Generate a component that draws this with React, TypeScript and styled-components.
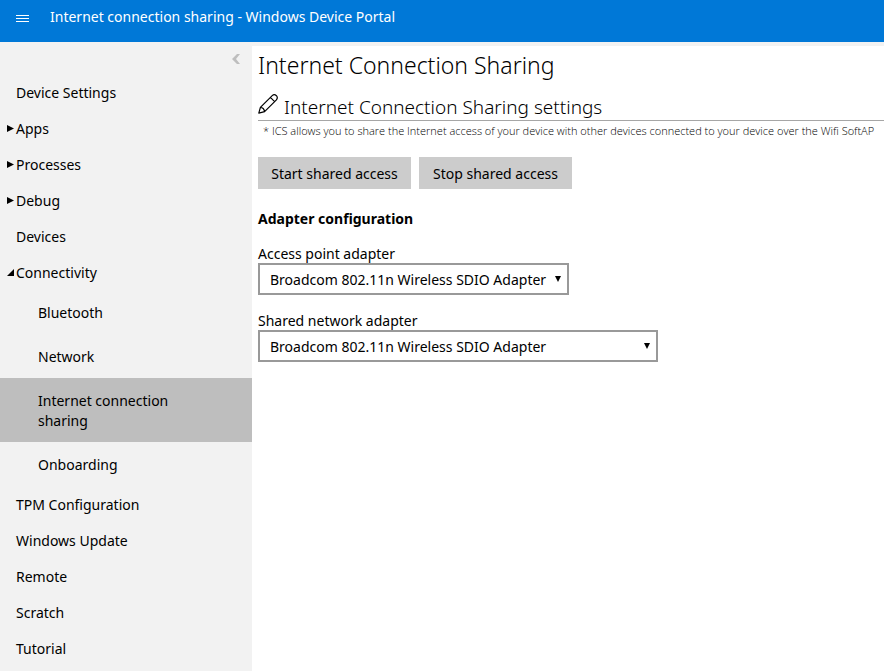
import React from 'react';
import styled, { createGlobalStyle } from 'styled-components';

const GlobalStyle = createGlobalStyle`
  *, *::before, *::after { box-sizing: border-box; }
  body {
    margin: 0;
    background: #fff;
    color: #000;
    font: 400 14px/20px 'Segoe UI', 'Noto Sans', 'Open Sans', sans-serif;
  }
`;

const Page = styled.div`
  display: flex;
  flex-direction: column;
  min-height: 100vh;
`;

const Header = styled.header`
  display: flex;
  align-items: flex-start;
  gap: 20px;
  height: 42px;
  padding: 7px 16px;
  background: #0078d7;
  color: #fff;
`;

const IconButton = styled.button`
  display: flex;
  padding: 0;
  border: 0;
  background: none;
  color: inherit;
  cursor: pointer;
`;

const MenuButton = styled(IconButton)`
  padding: 8px 1px 0 0;
`;

const Brand = styled.span`
  font-size: 14px;
  line-height: 20px;
`;

const Body = styled.div`
  display: grid;
  grid-template-columns: 252px minmax(0, 1fr);
  flex: 1;
`;

const Sidebar = styled.aside`
  background: #f2f2f2;
`;

const CollapseRow = styled.div`
  display: flex;
  justify-content: flex-end;
  height: 32px;
  padding: 12px 12px 0 0;
  color: #bebebe;
`;

const NavList = styled.ul`
  margin: 0;
  padding: 0;
  list-style: none;
`;

const NavLink = styled.a`
  display: flex;
  align-items: center;
  min-height: 36px;
  padding: 9px 16px 7px 6px;
  color: #000;
  text-decoration: none;
`;

const Marker = styled.span`
  display: flex;
  flex: 0 0 10px;
`;

const SubLink = styled.a<{ $active?: boolean }>`
  display: block;
  padding: 13px 64px 11px 38px;
  background: ${({ $active }) => ($active ? '#bebebe' : 'transparent')};
  color: #000;
  text-decoration: none;
`;

const Content = styled.main`
  padding: 3px 0 0 6px;
  border-top: 4px solid #f2f2f2;
`;

const Title = styled.h1`
  margin: 0;
  font-size: 23px;
  font-weight: 350;
  line-height: 32px;
`;

const SectionTitle = styled.h2`
  display: flex;
  align-items: center;
  gap: 6px;
  margin: 11px 0 0;
  padding-top: 2px;
  border-bottom: 1px solid #a6a6a6;
  font-size: 19px;
  font-weight: 350;
  line-height: 26px;

  > svg { margin-bottom: 6px; }
`;

const Note = styled.p`
  margin: 0;
  padding: 2px 0 0 5px;
  font-family: 'Segoe UI', 'Open Sans', sans-serif;
  font-size: 11px;
  font-weight: 300;
  line-height: 16px;
`;

const Actions = styled.div`
  display: flex;
  gap: 8px;
  margin-top: 18px;
`;

const ActionButton = styled.button`
  min-width: 153px;
  height: 32px;
  padding: 1px 12px 0;
  border: 0;
  background: #ccc;
  color: #000;
  font: inherit;
  cursor: pointer;
`;

const GroupTitle = styled.h3`
  margin: 20px 0 15px;
  font-size: 14px;
  font-weight: 700;
  line-height: 20px;
`;

const Field = styled.div`
  margin-bottom: 16px;
`;

const Label = styled.label`
  display: block;
  line-height: 19px;
`;

const SelectBox = styled.div<{ $width: number }>`
  display: grid;
  align-items: center;
  width: ${({ $width }) => $width}px;
  max-width: 100%;

  > * { grid-area: 1 / 1; }
  > svg { justify-self: end; margin-right: 8px; pointer-events: none; }
`;

const Select = styled.select`
  width: 100%;
  height: 32px;
  padding: 1px 18px 0 10px;
  border: 2px solid #999;
  border-radius: 0;
  appearance: none;
  background: #fff;
  color: #000;
  font: inherit;
`;

const MenuIcon = () => (
  <svg width="13" height="8" viewBox="0 0 13 8" fill="currentColor" aria-hidden="true">
    <path d="M0 0h13v1H0zM0 3h13v1H0zM0 6h13v1H0z" />
  </svg>
);

const CollapseIcon = () => (
  <svg width="8" height="10" viewBox="0 0 8 10" fill="currentColor" aria-hidden="true">
    <path d="M5 0h3L4 5 8 10H5L0 5z" />
  </svg>
);

const ClosedIcon = () => (
  <svg width="8" height="8" viewBox="0 0 8 8" aria-hidden="true">
    <path d="M1 0v7L8 3.5z" />
  </svg>
);

const OpenIcon = () => (
  <svg width="8" height="8" viewBox="0 0 8 8" aria-hidden="true">
    <path d="M8 0v7H1z" />
  </svg>
);

const PencilIcon = () => (
  <svg width="20" height="20" viewBox="0 0 20 20" fill="none" stroke="currentColor" strokeWidth="1.2" strokeLinejoin="round" aria-hidden="true">
    <path d="M.8 19.2 2.4 13.4 14.2 1.6Q16.3-.2 18.4 1.7 20.2 3.8 18.4 5.9L6.6 17.6ZM2.4 13.4Q5.9 13.7 6.6 17.6M12.4 3.4 16.6 7.6" />
  </svg>
);

const ArrowIcon = () => (
  <svg width="6" height="6" viewBox="0 0 6 6" aria-hidden="true">
    <path d="M0 0h6L3 6z" />
  </svg>
);

type NavItem = { label: string; closed?: boolean; children?: string[] };

const navItems: NavItem[] = [
  { label: 'Device Settings' },
  { label: 'Apps', closed: true },
  { label: 'Processes', closed: true },
  { label: 'Debug', closed: true },
  { label: 'Devices' },
  { label: 'Connectivity', children: ['Bluetooth', 'Network', 'Internet connection sharing', 'Onboarding'] },
  { label: 'TPM Configuration' },
  { label: 'Windows Update' },
  { label: 'Remote' },
  { label: 'Scratch' },
  { label: 'Tutorial' },
];

const activePage = 'Internet connection sharing';
const adapter = 'Broadcom 802.11n Wireless SDIO Adapter';

const AdapterField = ({ id, label, width }: { id: string; label: string; width: number }) => (
  <Field>
    <Label htmlFor={id}>{label}</Label>
    <SelectBox $width={width}>
      <Select id={id}>
        <option>{adapter}</option>
      </Select>
      <ArrowIcon />
    </SelectBox>
  </Field>
);

export default function App() {
  return (
    <Page>
      <GlobalStyle />
      <Header>
        <MenuButton type="button" aria-label="Menu"><MenuIcon /></MenuButton>
        <Brand>Internet connection sharing - Windows Device Portal</Brand>
      </Header>
      <Body>
        <Sidebar>
          <CollapseRow>
            <IconButton type="button" aria-label="Collapse navigation"><CollapseIcon /></IconButton>
          </CollapseRow>
          <nav>
            <NavList>
              {navItems.map(({ label, closed, children }) => (
                <li key={label}>
                  <NavLink href="#">
                    <Marker>{closed && <ClosedIcon />}{children && <OpenIcon />}</Marker>
                    {label}
                  </NavLink>
                  {children && (
                    <NavList>
                      {children.map((child) => (
                        <li key={child}>
                          <SubLink href="#" $active={child === activePage}>{child}</SubLink>
                        </li>
                      ))}
                    </NavList>
                  )}
                </li>
              ))}
            </NavList>
          </nav>
        </Sidebar>
        <Content>
          <Title>Internet Connection Sharing</Title>
          <SectionTitle><PencilIcon />Internet Connection Sharing settings</SectionTitle>
          <Note>* ICS allows you to share the Internet access of your device with other devices connected to your device over the Wifi SoftAP</Note>
          <Actions>
            <ActionButton type="button">Start shared access</ActionButton>
            <ActionButton type="button">Stop shared access</ActionButton>
          </Actions>
          <GroupTitle>Adapter configuration</GroupTitle>
          <AdapterField id="access-point" label="Access point adapter" width={311} />
          <AdapterField id="shared-network" label="Shared network adapter" width={400} />
        </Content>
      </Body>
    </Page>
  );
}
